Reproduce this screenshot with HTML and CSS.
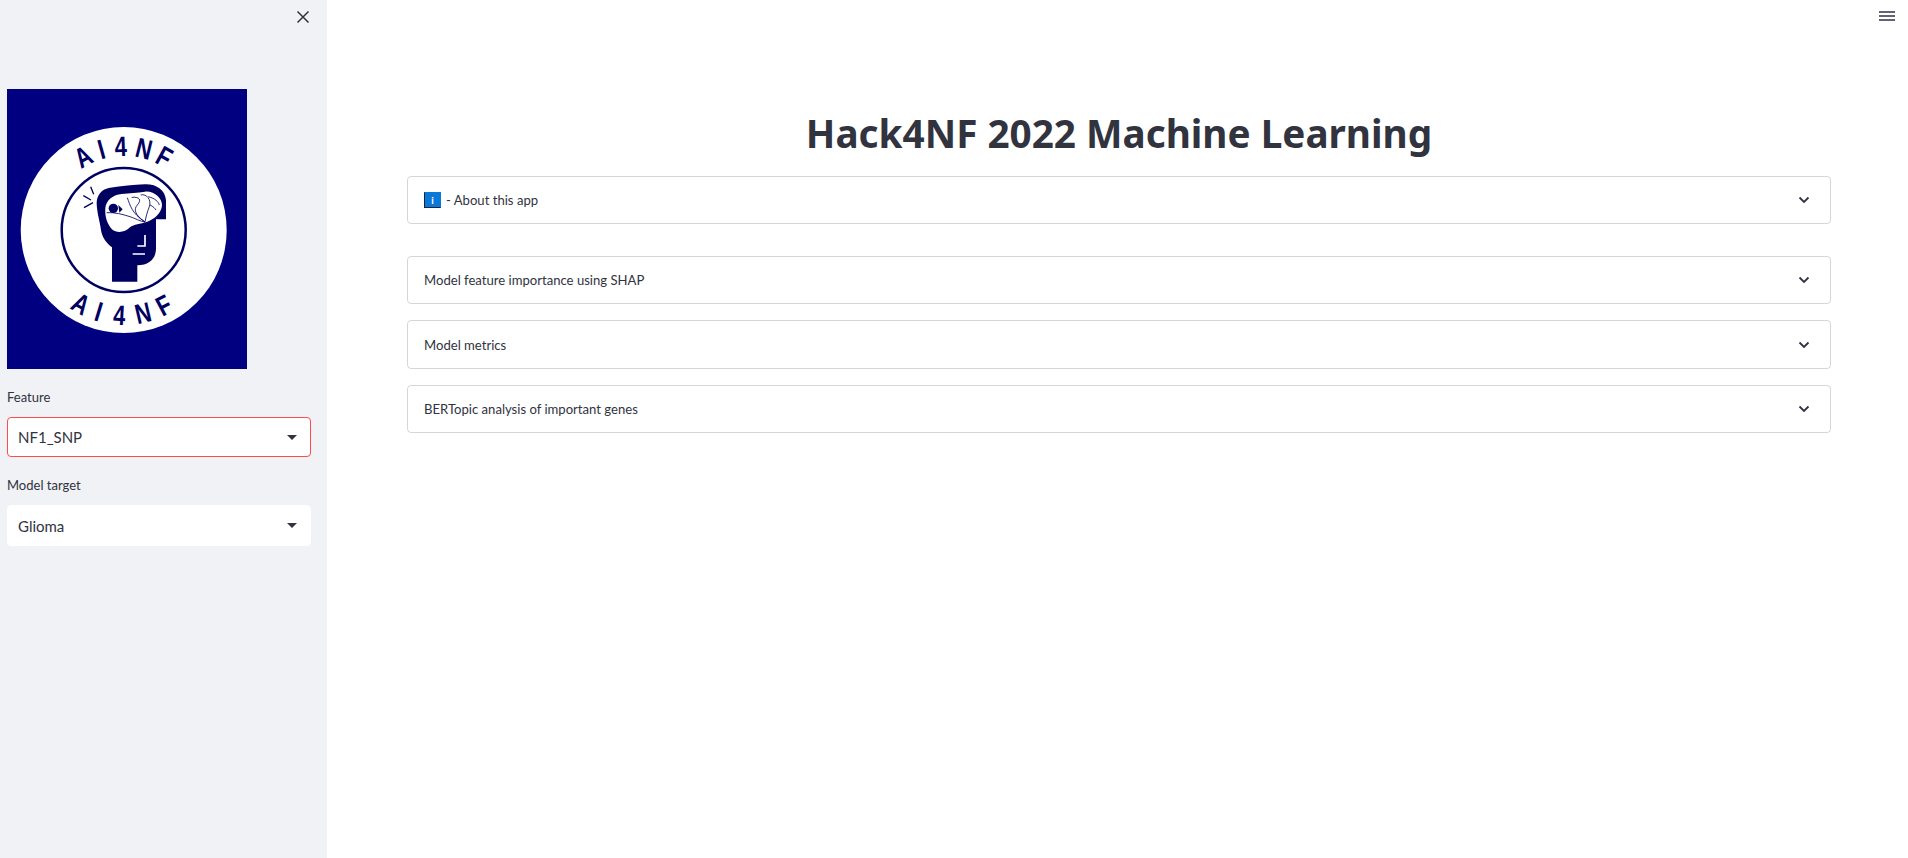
FILE: index.html
```html
<!DOCTYPE html>
<html lang="en">
<head>
  <meta charset="UTF-8" />
  <meta name="viewport" content="width=device-width, initial-scale=1.0" />
  <title>Hack4NF 2022 Machine Learning</title>
  <link rel="stylesheet" href="styles.css">
</head>
<body>
  <aside class="sidebar">
    <div class="sidebar-top">
      <button class="icon-btn" aria-label="Close sidebar">
        <svg width="14" height="14" viewBox="0 0 14 14"><path d="M1.5 1.5 12.5 12.5M12.5 1.5 1.5 12.5" fill="none" stroke="#31333f" stroke-width="1.5"/></svg>
      </button>
    </div>

    <svg class="logo" width="240" height="280" viewBox="0 0 240 280" role="img" aria-label="AI4NF logo">
      <rect width="240" height="280" fill="#000080"/>
      <circle cx="116.7" cy="141" r="103" fill="#fff"/>
      <circle cx="116.7" cy="141" r="62" fill="none" stroke="#000060" stroke-width="2.5"/>
      <g class="logo-text" text-anchor="middle">
        <text transform="rotate(-29 116.7 141) translate(116.7 67) scale(.78 1)">A</text>
        <text transform="rotate(-15.5 116.7 141) translate(116.7 67) scale(.78 1)">I</text>
        <text transform="rotate(-2 116.7 141) translate(116.7 67) scale(.78 1)">4</text>
        <text transform="rotate(14 116.7 141) translate(116.7 67) scale(.78 1)">N</text>
        <text transform="rotate(29 116.7 141) translate(116.7 67) scale(.78 1)">F</text>
        <text transform="rotate(30 116.7 141) translate(116.7 236) scale(.78 1)">A</text>
        <text transform="rotate(17 116.7 141) translate(116.7 236) scale(.78 1)">I</text>
        <text transform="rotate(3 116.7 141) translate(116.7 236) scale(.78 1)">4</text>
        <text transform="rotate(-13 116.7 141) translate(116.7 236) scale(.78 1)">N</text>
        <text transform="rotate(-28 116.7 141) translate(116.7 236) scale(.78 1)">F</text>
      </g>
      <g transform="translate(43 61) scale(.3333)">
        <path fill="#000060" d="M186 395V292C170 280 156 262 153 240C150 215 141 190 140 160C140 135 155 117 180 113C215 108 250 105 285 103C320 102 345 120 348 150V208H318V295C318 325 300 345 262 346V395Z"/>
        <path fill="#fff" d="M166 175C168 150 190 134 215 132C240 130 262 128 285 125C312 122 338 145 336 168C332 190 315 207 292 215C270 222 252 222 240 232C225 248 200 250 186 238C172 222 164 200 166 175Z"/>
        <g fill="none" stroke="#000060" stroke-width="2.5">
          <path d="M170 188C195 187 215 192 240 200C255 205 270 214 285 216"/>
          <path d="M232 143C240 165 245 190 285 216"/>
          <path d="M245 142C270 140 275 150 262 165C250 178 255 195 285 216"/>
          <path d="M272 135C290 130 305 150 298 170C292 185 288 200 285 216"/>
          <path d="M295 140C315 145 325 155 328 165M300 165C310 170 315 175 318 180"/>
          <path stroke-width="4" d="M102 173 129 158M100 137 123 150M122 110 131 133"/>
        </g>
        <circle cx="190" cy="175" r="14" fill="#000060"/>
        <path d="M205 165 218 178 208 188Z" fill="#000060"/>
        <path d="M285 255V288H262M248 312H285" fill="none" stroke="#fff" stroke-width="5"/>
      </g>
    </svg>

    <div class="field">
      <label class="field-label">Feature</label>
      <div class="select select-focus">
        <span>NF1_SNP</span>
        <span class="caret"></span>
      </div>
    </div>
    <div class="field">
      <label class="field-label">Model target</label>
      <div class="select">
        <span>Glioma</span>
        <span class="caret"></span>
      </div>
    </div>
  </aside>

  <main class="main">
    <div class="main-top">
      <button class="icon-btn" aria-label="Menu">
        <svg width="16" height="10" viewBox="0 0 16 10"><path d="M0 1h16M0 5h16M0 9h16" fill="none" stroke="#31333f" stroke-width="1.4"/></svg>
      </button>
    </div>
    <div class="content">
      <h1>Hack4NF 2022 Machine Learning</h1>

      <div class="expander">
        <span class="expander-title"><span class="info-icon">i</span> - About this app</span>
        <svg class="chevron" width="12" height="8" viewBox="0 0 12 8"><path d="M1.5 1.5 6 6l4.5-4.5" fill="none" stroke="#31333f" stroke-width="1.8"/></svg>
      </div>

      <div class="expander-group">
        <div class="expander">
          <span class="expander-title">Model feature importance using SHAP</span>
          <svg class="chevron" width="12" height="8" viewBox="0 0 12 8"><path d="M1.5 1.5 6 6l4.5-4.5" fill="none" stroke="#31333f" stroke-width="1.8"/></svg>
        </div>
        <div class="expander">
          <span class="expander-title">Model metrics</span>
          <svg class="chevron" width="12" height="8" viewBox="0 0 12 8"><path d="M1.5 1.5 6 6l4.5-4.5" fill="none" stroke="#31333f" stroke-width="1.8"/></svg>
        </div>
        <div class="expander">
          <span class="expander-title">BERTopic analysis of important genes</span>
          <svg class="chevron" width="12" height="8" viewBox="0 0 12 8"><path d="M1.5 1.5 6 6l4.5-4.5" fill="none" stroke="#31333f" stroke-width="1.8"/></svg>
        </div>
      </div>
    </div>
  </main>
</body>
</html>
```

FILE: styles.css
```css
* {
  margin: 0;
  padding: 0;
  box-sizing: border-box;
}

body {
  height: 100vh;
  display: flex;
  overflow: hidden;
  background: #fff;
  color: #31333f;
  font-family: 'Lato', 'Noto Sans', sans-serif;
}

.sidebar {
  width: 327px;
  flex-shrink: 0;
  background: #f0f2f6;
  padding: 0 16px 0 7px;
}

.sidebar-top {
  height: 89px;
  display: flex;
  justify-content: flex-end;
  align-items: flex-start;
  padding: 10px 1px 0 0;
}

.icon-btn {
  display: flex;
  border: none;
  background: none;
}

.logo {
  display: block;
  margin-bottom: 18px;
}

.logo-text {
  font-family: 'Liberation Sans', sans-serif;
  font-weight: 700;
  font-size: 28px;
  fill: #000060;
}

.field {
  margin-bottom: 18px;
}

.field-label {
  display: block;
  font-size: 13px;
  line-height: 20px;
  margin-bottom: 10px;
}

.select {
  height: 40.4px;
  display: flex;
  justify-content: space-between;
  align-items: center;
  padding: 0 13px 0 10px;
  background: #fff;
  border: 1px solid #fff;
  border-radius: 4px;
  font-size: 15px;
}

.select-focus {
  border-color: #ff4b4b;
}

.caret {
  width: 0;
  height: 0;
  border-left: 5px solid transparent;
  border-right: 5px solid transparent;
  border-top: 5px solid #31333f;
}

.main {
  flex: 1;
  min-width: 0;
}

.main-top {
  height: 0;
  display: flex;
  justify-content: flex-end;
  padding: 11px 13px 0 0;
}

.content {
  padding: 95px 77px 0 80px;
}

h1 {
  font-family: 'Noto Sans', sans-serif;
  font-size: 38.7px;
  line-height: 54px;
  font-weight: 700;
  text-align: center;
  margin-bottom: 16px;
}

.expander {
  height: 48px;
  display: flex;
  justify-content: space-between;
  align-items: center;
  padding: 0 20px 0 16px;
  border: 1px solid rgba(49, 51, 63, 0.2);
  border-radius: 4px;
}

.expander-group {
  display: flex;
  flex-direction: column;
  gap: 16px;
  margin-top: 32px;
}

.expander-group .expander {
  height: 48.4px;
}

.expander-title {
  display: flex;
  align-items: center;
  gap: 4px;
  font-size: 13.1px;
}

.info-icon {
  width: 17px;
  height: 16px;
  margin-right: 1px;
  display: flex;
  justify-content: center;
  align-items: center;
  background: #0a78d7;
  border: 1px solid #10253f;
  border-right-color: #0a78d7;
  border-top-color: #0a78d7;
  color: #fff;
  font-size: 10px;
  font-weight: 700;
}
```
